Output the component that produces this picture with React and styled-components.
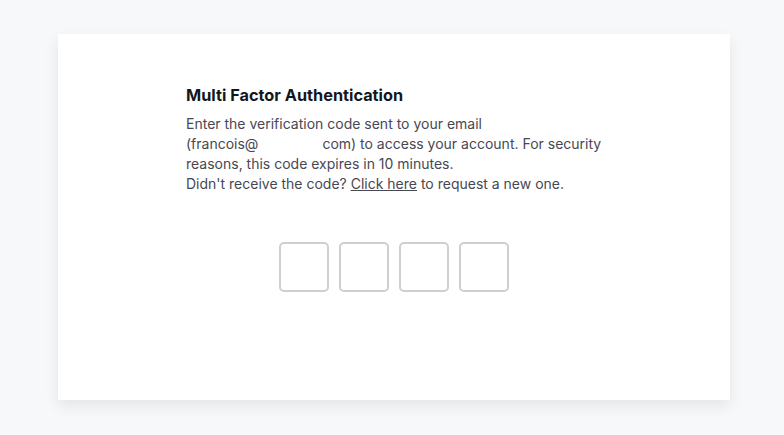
import React from "react";
import styled, { createGlobalStyle } from "styled-components";

const Global = createGlobalStyle`
  html, body { margin: 0; padding: 0; background: #f7f8fa; }
  body { font-family: "Inter", "Noto Sans", sans-serif; }
`;

const Page = styled.div`
  width: 784px;
  height: 435px;
  padding-top: 34px;
  box-sizing: border-box;
  display: flex;
  justify-content: center;
  align-items: flex-start;
`;

const Card = styled.div`
  width: 672px;
  height: 366px;
  box-sizing: border-box;
  background: #ffffff;
  box-shadow: 0 6px 14px rgba(0, 0, 0, 0.08);
  padding: 50px 128px 0;
  margin-left: 4px;
  display: flex;
  flex-direction: column;
`;

const Title = styled.h1`
  margin: 0;
  font-size: 16.3px;
  line-height: 22px;
  font-weight: 700;
  color: #14161e;
`;

const Text = styled.p`
  margin: 8px 0 0;
  font-size: 14px;
  line-height: 20px;
  color: #484852;
  width: 424px;
`;

const Email = styled.span`
  white-space: nowrap;
`;

const Masked = styled.span`
  padding-right: 64px;
`;

const Link = styled.a`
  color: #484852;
  text-decoration: underline;
  cursor: pointer;
`;

const Codes = styled.div`
  display: flex;
  justify-content: center;
  gap: 10px;
  margin-top: 48px;
`;

const CodeBox = styled.input`
  width: 50px;
  height: 50px;
  box-sizing: border-box;
  border: 2px solid #cfcfcf;
  border-radius: 5px;
  background: #fff;
  outline: none;
  padding: 0;
  text-align: center;
  font-size: 20px;
  font-family: inherit;
`;

export default function App() {
  return (
    <>
      <Global />
      <Page>
        <Card>
          <Title>Multi Factor Authentication</Title>
          <Text>
            Enter the verification code sent to your email{" "}
            <Email>
              <Masked>(francois@</Masked>com)
            </Email>{" "}
            to access your account. For security reasons, this code expires in 10 minutes.
            <br />
            Didn't receive the code? <Link>Click here</Link> to request a new one.
          </Text>
          <Codes>
            {[0, 1, 2, 3].map((i) => (
              <CodeBox key={i} maxLength={1} />
            ))}
          </Codes>
        </Card>
      </Page>
    </>
  );
}
